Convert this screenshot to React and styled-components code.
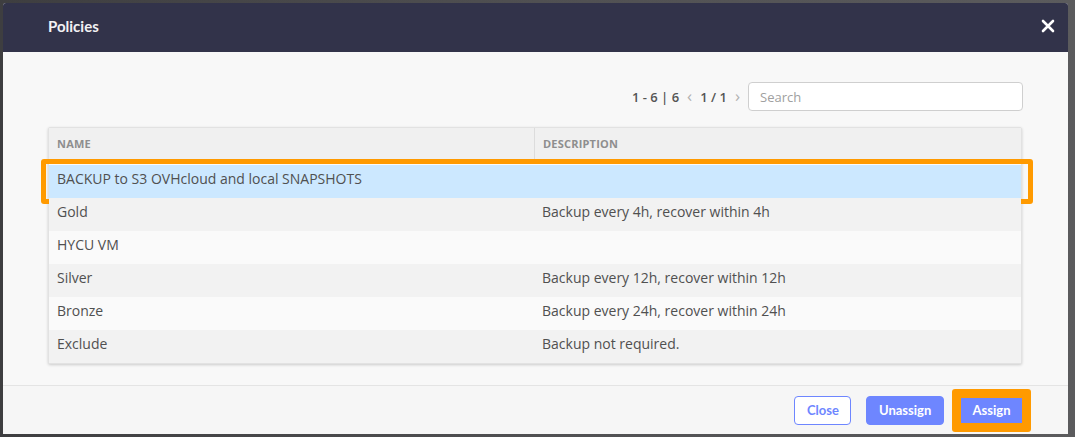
import styled, { createGlobalStyle } from "styled-components";

const GlobalStyle = createGlobalStyle`
    html, body {
        margin: 0;
        padding: 0;
        background: #4f4f50;
    }
    * {
        box-sizing: border-box;
    }
`

const Backdrop = styled.div`
    width: 1075px;
    height: 437px;
    padding: 3px 7px 0 3px;
    background: linear-gradient(90deg, #3e3e40 0%, #505052 50%, #5b5b5d 100%);
    overflow: hidden;
`

const Modal = styled.div`
    display: flex;
    flex-direction: column;
    width: 1065px;
    height: 431px;
    background: #f8f8f8;
    border-radius: 3px 3px 0 0;
    overflow: hidden;
`

const Header = styled.div`
    display: flex;
    align-items: center;
    justify-content: space-between;
    height: 49px;
    flex-shrink: 0;
    padding: 0 13px 3px 45px;
    background: #32334a;
    color: #f2f2f4;
`

const Title = styled.h2`
    margin: 0;
    font-family: Lato, "Liberation Sans", sans-serif;
    font-size: 15px;
    font-weight: 700;
`

const CloseX = styled.button`
    display: flex;
    background: none;
    border: none;
    padding: 0;
    cursor: pointer;
`

const Body = styled.div`
    flex: 1;
    padding: 30px 45px 0 45px;
    font-family: "Open Sans", "Liberation Sans", sans-serif;
`

const Toolbar = styled.div`
    display: flex;
    align-items: center;
    justify-content: flex-end;
    gap: 8px;
`

const Pager = styled.div`
    display: flex;
    align-items: center;
    gap: 8px;
    font-size: 13px;
    font-weight: 600;
    color: #555555;
`

const Chevron = styled.span`
    color: #b0b0b0;
    font-weight: 400;
    font-size: 17px;
    line-height: 1;
    margin-top: -2px;
`

const Search = styled.input`
    width: 275px;
    height: 29px;
    padding: 0 11px;
    border: 1px solid #cfcfcf;
    border-radius: 4px;
    background: #ffffff;
    font-family: "Open Sans", "Liberation Sans", sans-serif;
    font-size: 13px;
    color: #555;
    outline: none;

    &::placeholder {
        color: #a0a0a0;
    }
`

const Table = styled.div`
    margin-top: 16px;
    width: 974px;
    background: #fafafa;
    border: 1px solid #e2e2e2;
    border-radius: 2px;
    box-shadow: 0 1px 3px rgba(0, 0, 0, 0.18);
`

const Row = styled.div`
    position: relative;
    display: grid;
    grid-template-columns: 485px 1fr;
    height: 33px;
    background: ${p => (p.$selected ? "#cce8ff" : p.$odd ? "#f2f2f2" : "#fafafa")};

    ${p => p.$selected && `
        &::after {
            content: "";
            position: absolute;
            left: -8px;
            right: -12px;
            top: -6px;
            bottom: -6px;
            border: 5px solid #ff9a00;
            border-radius: 3px;
        }
    `}
`

const HeadRow = styled.div`
    display: grid;
    grid-template-columns: 485px 1fr;
    height: 33px;
    background: #f0f0f0;
    margin-bottom: 4px;
`

const HeadCell = styled.div`
    display: flex;
    align-items: center;
    padding: 0 8px;
    font-size: 11px;
    font-weight: 700;
    color: #8e8e8e;
    letter-spacing: 0.2px;
    border-left: ${p => (p.$divider ? "1px solid #dcdcdc" : "none")};
    height: 31px;
`

const Cell = styled.div`
    padding: 4px 8px 0 8px;
    font-size: 14px;
    line-height: 20px;
    color: #505050;
    white-space: nowrap;
`

const Footer = styled.div`
    display: flex;
    align-items: center;
    justify-content: flex-end;
    gap: 15px;
    height: 49px;
    flex-shrink: 0;
    padding: 0 46px 0 0;
    border-top: 1px solid #e4e4e4;
    background: #f6f6f6;
`

const Button = styled.button`
    height: ${p => (p.$flat ? "25px" : "29px")};
    padding: 0 ${p => (p.$flat ? "0" : "12px")};
    width: ${p => p.$w};
    border-radius: ${p => (p.$flat ? "0" : "4px")};
    border: 1px solid #6e86ff;
    background: ${p => (p.$primary ? "#6e86ff" : "#ffffff")};
    color: ${p => (p.$primary ? "#ffffff" : "#6e86ff")};
    font-family: Lato, "Liberation Sans", sans-serif;
    font-size: 13px;
    font-weight: 700;
    cursor: pointer;
`

const Highlight = styled.div`
    display: flex;
    padding: 9px;
    margin-left: -7px;
    margin-right: -9px;
    background: #ff9a00;
    border-radius: 3px;
`

const policies = [
    { nome: "BACKUP to S3 OVHcloud and local SNAPSHOTS", desc: "" },
    { nome: "Gold", desc: "Backup every 4h, recover within 4h" },
    { nome: "HYCU VM", desc: "" },
    { nome: "Silver", desc: "Backup every 12h, recover within 12h" },
    { nome: "Bronze", desc: "Backup every 24h, recover within 24h" },
    { nome: "Exclude", desc: "Backup not required." },
];

const App = () => {
    return (
        <Backdrop>
            <GlobalStyle />
            <Modal>
                <Header>
                    <Title>Policies</Title>
                    <CloseX aria-label="Close">
                        <svg width="14" height="14" viewBox="0 0 14 14">
                            <path d="M2 2 L12 12 M12 2 L2 12" stroke="#ffffff" strokeWidth="2.6" strokeLinecap="round" />
                        </svg>
                    </CloseX>
                </Header>
                <Body>
                    <Toolbar>
                        <Pager>
                            <span>1 - 6 | 6</span>
                            <Chevron>‹</Chevron>
                            <span>1 / 1</span>
                            <Chevron>›</Chevron>
                        </Pager>
                        <Search placeholder="Search" />
                    </Toolbar>
                    <Table>
                        <HeadRow>
                            <HeadCell>NAME</HeadCell>
                            <HeadCell $divider>DESCRIPTION</HeadCell>
                        </HeadRow>
                        {policies.map((p, i) => (
                            <Row key={p.nome} $selected={i === 0} $odd={i % 2 === 1}>
                                <Cell>{p.nome}</Cell>
                                <Cell>{p.desc}</Cell>
                            </Row>
                        ))}
                    </Table>
                </Body>
                <Footer>
                    <Button $w="57px">Close</Button>
                    <Button $primary $w="78px">Unassign</Button>
                    <Highlight>
                        <Button $primary $flat $w="61px">Assign</Button>
                    </Highlight>
                </Footer>
            </Modal>
        </Backdrop>
    )
}

export default App;
